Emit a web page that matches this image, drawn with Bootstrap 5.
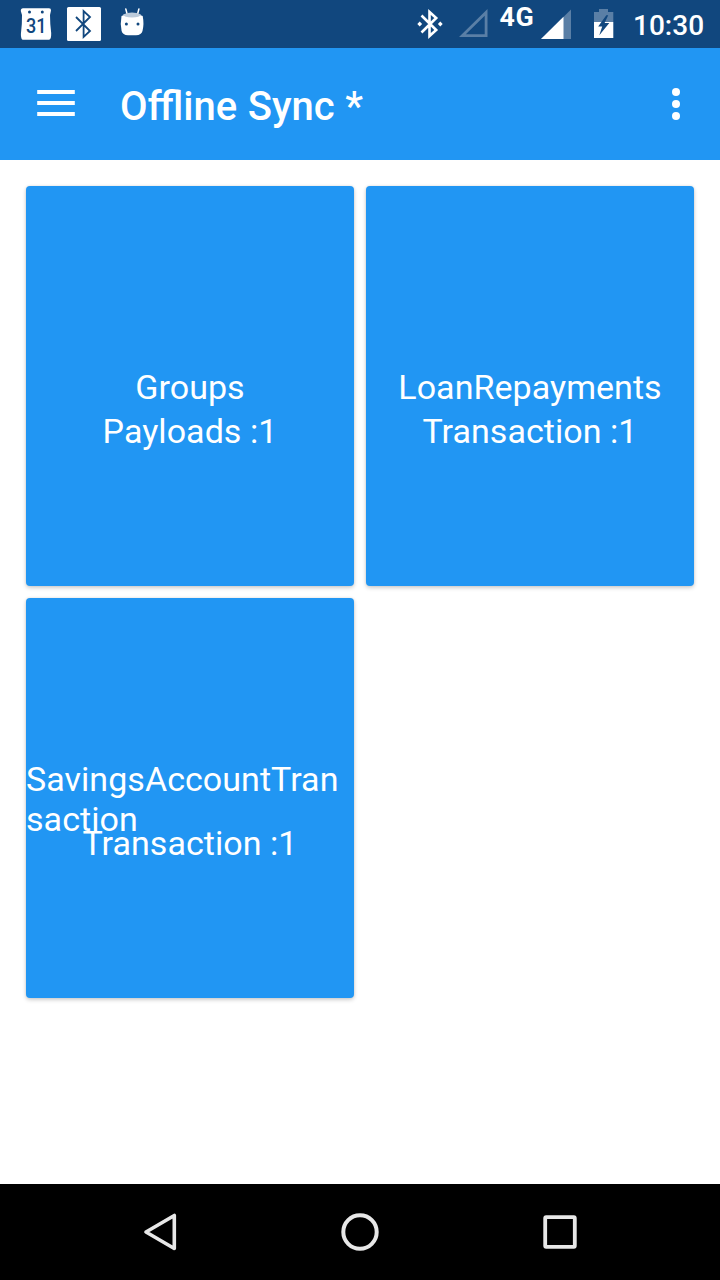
<!DOCTYPE html>
<html lang="en">
<head>
<meta charset="utf-8">
<meta name="viewport" content="width=device-width, initial-scale=1">
<title>Offline Sync</title>
<link href="https://cdn.jsdelivr.net/npm/bootstrap@5.3.0/dist/css/bootstrap.min.css" rel="stylesheet">
<style>
  body { font-family: Roboto, "Noto Sans", sans-serif; height: 1280px; overflow: hidden; }
  .status-bar { height: 48px; background: #11477e; }
  .clock { font-size: 28px; font-weight: 500; line-height: 33px; padding-top: 9px; width: 87px; white-space: nowrap; }
  .app-bar { height: 112px; background: #2196f3; }
  .app-title { font-size: 40px; font-weight: 500; line-height: 48px; word-spacing: .6px; margin: 6px 0 0 45px; }
  .tiles { display: grid; grid-template-columns: 328px 328px; grid-auto-rows: 400px; gap: 12px; padding: 26px; }
  .tile { display: grid; background: #2196f3; color: #fff; border-radius: 4px;
          box-shadow: 0 2px 4px rgba(0,0,0,.18), 0 0 3px rgba(0,0,0,.1); }
  .tile > * { grid-area: 1 / 1; margin: 0; font-size: 34px; line-height: 40px; font-weight: 400; letter-spacing: .05px; }
  .tile-name { place-self: center; word-break: break-all; padding-top: 2px; }
  .tile-count { place-self: start center; padding-top: 225px; }
  .nav-bar { height: 96px; background: #000; }
  svg { display: block; flex: none; }
  .icon-btn { padding: 0; border: 0; background: none; }
</style>
<script src="https://cdn.jsdelivr.net/npm/bootstrap@5.3.0/dist/js/bootstrap.bundle.min.js"></script>
</head>
<body class="d-flex flex-column bg-white">
<header>
  <div class="status-bar d-flex text-white">
    <svg width="160" height="48" viewBox="0 0 160 48" aria-hidden="true">
      <path fill="#fff" fill-rule="evenodd" d="M23 8.3H49Q51.2 8.3 51 10.5L50 15Q50 24 51.2 33Q51.4 39.7 49 39.8H23Q20.8 39.7 20.9 34Q22.2 24 22 15L20.8 11Q20.8 8.3 23 8.3ZM29.5 10.4a1.5 1.5 0 1 0 0 3a1.5 1.5 0 1 0 0-3ZM42.3 10.4a1.5 1.5 0 1 0 0 3a1.5 1.5 0 1 0 0-3Z"/>
      <text transform="translate(26 33.2) scale(.9 1)" font-size="20" font-weight="500" fill="#11477e">31</text>
      <rect x="67" y="7" width="34" height="34" rx="1.5" fill="#fff"/>
      <path d="M76 17L90 31L83.6 37V11L90 17L76 31" fill="none" stroke="#11477e" stroke-width="1.8"/>
      <path d="M125.8 9l1.3 5M138.9 9l-1.3 5" stroke="#fff" stroke-width="1.5" stroke-linecap="round"/>
      <path fill="#fff" d="M121.5 16Q132 10.5 142.7 16Q144.3 24 142.5 31Q141.5 35 136 35.3H128Q122.6 35 121.6 31Q120 24 121.5 16Z"/>
      <path fill="#bccbdb" d="M123 14.5Q132 10.5 141 14.5Q140 17.5 132 17.5Q124 17.5 123 14.5Z"/>
      <circle cx="126.4" cy="24" r="1.5" fill="#11477e"/><circle cx="138" cy="24" r="1.5" fill="#11477e"/>
    </svg>
    <svg class="ms-auto" width="223" height="48" viewBox="410 0 223 48" aria-hidden="true">
      <path d="M421.5 15.5L436.2 30L429.5 36V12L436.2 18L421.5 32.5" fill="none" stroke="#fff" stroke-width="2.6"/>
      <path fill="#fff" d="M419.7 21.6l2.4 2.4-2.4 2.4-2.4-2.4zM440.3 21.6l2.4 2.4-2.4 2.4-2.4-2.4z"/>
      <path fill="#5a7fa6" fill-rule="evenodd" d="M487.5 9V37H459ZM484.7 15.8L465.8 34.2H484.7Z"/>
      <text transform="translate(499.5 25.9) scale(1.07 1)" font-size="25" font-weight="700" letter-spacing=".6" fill="#fff">4G</text>
      <path fill="#5a7fa6" d="M571 9.5V39H541Z"/><path fill="#fff" d="M563.5 16.8V39H541Z"/>
      <path fill="#5a7fa6" d="M599 9h9v3h5.3v10H594V12h5z"/>
      <path fill="#fff" d="M594 22h19.3v16H594z"/>
      <path fill="#11477e" d="M606.3 15.2L598.2 26.6H602.2L599.3 35.2L609.3 23H604.6L608.2 15.2Z"/>
    </svg>
    <div class="clock">10:30</div>
  </div>
  <nav class="app-bar d-flex align-items-center text-white">
    <button class="icon-btn ms-4" aria-label="Menu"><svg width="51" height="112" viewBox="24 48 51 112"><path fill="#fff" d="M37.2 90h37.6v4H37.2zM37.2 101h37.6v4H37.2zM37.2 112h37.6v4H37.2z"/></svg></button>
    <h1 class="app-title">Offline Sync *</h1>
    <button class="icon-btn ms-auto" aria-label="More"><svg width="60" height="112" viewBox="660 48 60 112"><g fill="#fff"><circle cx="676" cy="92" r="4"/><circle cx="676" cy="104" r="4"/><circle cx="676" cy="116" r="4"/></g></svg></button>
  </nav>
</header>
<main class="tiles flex-grow-1">
  <section class="tile"><h2 class="tile-name">Groups</h2><p class="tile-count">Payloads :1</p></section>
  <section class="tile"><h2 class="tile-name">LoanRepayments</h2><p class="tile-count">Transaction :1</p></section>
  <section class="tile"><h2 class="tile-name">SavingsAccountTransaction</h2><p class="tile-count">Transaction :1</p></section>
</main>
<footer class="nav-bar d-flex justify-content-center">
  <svg width="200" height="96" viewBox="60 1184 200 96" aria-label="Back"><path d="M174.3 1215.5V1248.5L146 1232Z" fill="none" stroke="#e8e8e8" stroke-width="3.6" stroke-linejoin="round"/></svg>
  <svg width="200" height="96" viewBox="260 1184 200 96" aria-label="Home"><circle cx="360" cy="1232" r="16.7" fill="none" stroke="#e8e8e8" stroke-width="4"/></svg>
  <svg width="200" height="96" viewBox="460 1184 200 96" aria-label="Recents"><rect x="545.2" y="1217.2" width="29.6" height="29.6" rx="1" fill="none" stroke="#e8e8e8" stroke-width="3.8"/></svg>
</footer>
</body>
</html>
